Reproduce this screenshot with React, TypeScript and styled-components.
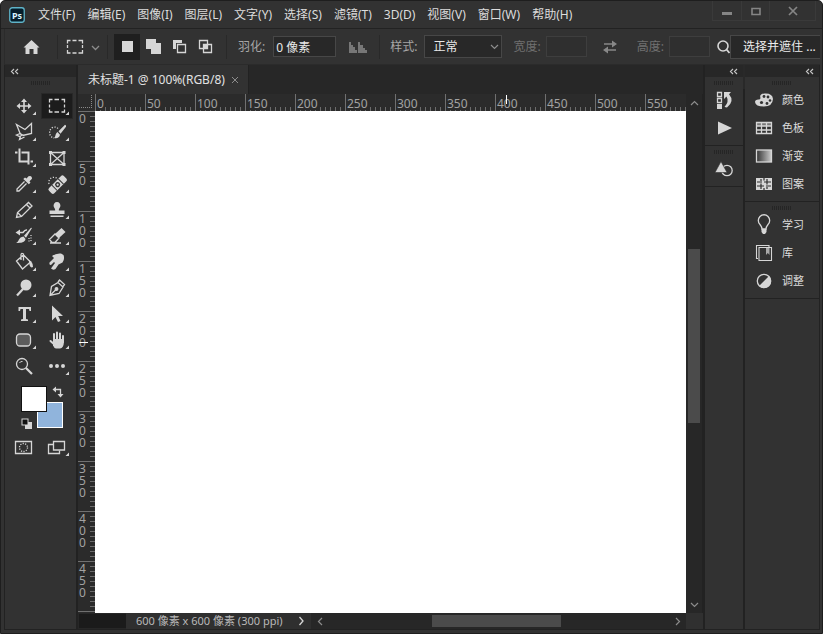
import React, { ReactNode } from "react";
import styled, { createGlobalStyle, css } from "styled-components";

const c = {
  panel: "#323232",
  dark: "#272727",
  ruler: "#2b2b2b",
  line: "#222222",
  field: "#282828",
  edge: "#474747",
  icon: "#d6d6d6",
  text: "#dcdcdc",
  soft: "#a6a6a6",
  dim: "#707070",
};

const Global = createGlobalStyle`
  * { box-sizing: border-box; }
  html, body { margin: 0; background: #fff; }
  body, button, input, select {
    font-family: "Noto Sans", "Noto Sans CJK SC", sans-serif;
    font-size: 12px;
    line-height: 16px;
    color: ${c.text};
  }
  button { background: none; border: 0; padding: 0; margin: 0; }
  svg { display: block; flex: none; }
`;

/* ---------- frame ---------- */

const Window = styled.div`
  height: 100vh;
  min-height: 480px;
  display: flex;
  flex-direction: column;
  background: ${c.panel};
  border: 1px solid #1e1e1e;
  border-radius: 5px 5px 0 0;
  overflow: hidden;
`;

const TitleBar = styled.header`
  display: flex;
  align-items: center;
  height: 28px;
  flex: none;
  padding-left: 8px;
  border-bottom: 1px solid ${c.line};
`;

const Menus = styled.nav`
  display: flex;
  gap: 12px;
  margin-left: 13px;
  flex: 1;
  white-space: nowrap;
`;

const WindowButtons = styled.div`
  display: flex;
  align-self: flex-start;
  margin-right: 6px;
  border: 1px solid #3a3a3a;
  border-top: 0;
`;

const WindowButton = styled.button<{ $wide?: boolean }>`
  width: ${(p) => (p.$wide ? 46 : 28)}px;
  height: 19px;
  display: flex;
  align-items: center;
  justify-content: center;
  & + & { border-left: 1px solid #3a3a3a; }
`;

const OptionsBar = styled.div`
  display: flex;
  align-items: center;
  height: 36px;
  flex: none;
  margin: 0 2px 0 3px;
  border: 1px solid #2b2b2b;
  border-width: 0 0 1px 1px;
  white-space: nowrap;
  overflow: hidden;
`;

const Separator = styled.span`
  width: 1px;
  height: 24px;
  background: #292929;
  flex: none;
`;

const IconButton = styled.button<{ $w: number; $active?: boolean }>`
  width: ${(p) => p.$w}px;
  height: 26px;
  flex: none;
  display: flex;
  align-items: center;
  justify-content: center;
  background: ${(p) => (p.$active ? "#1f1f1f" : "transparent")};
`;

const SelectionModes = styled.div`
  display: flex;
  margin: 0 8px 0 6px;
`;

const Field = styled.label<{ $dim?: boolean; $gap: number; $before: number }>`
  display: flex;
  align-items: center;
  flex: none;
  gap: ${(p) => p.$gap}px;
  margin-left: ${(p) => p.$before}px;
  color: ${(p) => (p.$dim ? c.dim : c.soft)};
`;

const fieldBox = css`
  height: 21px;
  background: ${c.field};
  border: 1px solid ${c.edge};
  border-radius: 0;
  color: #e8e8e8;
  outline: none;
  margin: 0;
`;

const TextInput = styled.input<{ $w: number }>`
  ${fieldBox}
  width: ${(p) => p.$w}px;
  padding: 0 2px;
  &:disabled { background: #2f2f2f; border-color: #3e3e3e; }
`;

const SelectWrap = styled.span`
  display: grid;
  align-items: center;
  > * { grid-area: 1 / 1; }
  > svg { justify-self: end; margin-right: 3px; pointer-events: none; }
`;

const Select = styled.select`
  ${fieldBox}
  width: 78px;
  height: 23px;
  padding: 0 8px;
  appearance: none;
`;

const MaskButton = styled.button`
  flex: 1;
  min-width: 88px;
  height: 24px;
  background: ${c.field};
  border: 1px solid ${c.edge};
  border-right: 0;
  color: #ececec;
  padding-left: 8px;
  text-align: center;
`;

/* ---------- body ---------- */

const Body = styled.div`
  flex: 1;
  min-height: 0;
  display: flex;
  margin: 0 2px 3px 3px;
  border: 1px solid ${c.line};
  border-top: 0;
  background: ${c.line};
`;

const Dock = styled.aside<{ $w: number }>`
  width: ${(p) => p.$w}px;
  flex: none;
  display: flex;
  flex-direction: column;
  background: ${c.panel};
`;

const DockHeader = styled.div<{ $left?: boolean }>`
  height: 12px;
  flex: none;
  display: flex;
  align-items: center;
  justify-content: ${(p) => (p.$left ? "flex-start" : "flex-end")};
  padding: 0 5px;
  background: ${c.dark};
`;

const Grip = styled.div`
  width: 20px;
  height: 4px;
  margin: 4px auto 1px;
  flex: none;
  background: repeating-linear-gradient(90deg, #252525 0 1px, ${c.panel} 1px 2px);
`;

const ToolGrid = styled.div<{ $top: number }>`
  display: grid;
  grid-template-columns: 32px 32px;
  grid-auto-rows: 26px;
  column-gap: 1px;
  padding: ${(p) => p.$top}px 0 0 3px;
`;

const Tool = styled.button<{ $active?: boolean }>`
  height: 26px;
  display: flex;
  align-items: center;
  justify-content: center;
  ${(p) => p.$active && css`
    background: #1c1c1c;
    box-shadow: inset 0 0 0 1px #282828;
  `}
`;

const Swatches = styled.div`
  position: relative;
  height: 48px;
  margin: 7px 0 0 16px;
`;

const Swatch = styled.button<{ $color: string; $back?: boolean }>`
  position: absolute;
  left: ${(p) => (p.$back ? 16 : 0)}px;
  top: ${(p) => (p.$back ? 16 : 0)}px;
  width: 26px;
  height: 26px;
  background: ${(p) => p.$color};
  border: 1px solid ${(p) => (p.$back ? "#fff" : "#111")};
`;

const SwatchAction = styled.button<{ $place: "swap" | "reset" }>`
  position: absolute;
  ${(p) => (p.$place === "swap" ? "left: 31px; top: 0;" : "left: 0; top: 32px;")}
`;

const Workspace = styled.main`
  flex: 1;
  min-width: 0;
  display: flex;
  flex-direction: column;
  margin: 0 2px;
  background: ${c.dark};
`;

const Tabs = styled.div`
  display: flex;
  height: 29px;
  flex: none;
`;

const Tab = styled.div`
  display: flex;
  align-items: center;
  gap: 6px;
  padding: 0 9px 0 10px;
  background: ${c.panel};
  color: #e2e2e2;
  border-right: 1px solid ${c.line};
`;

const Stage = styled.div`
  flex: 1;
  min-height: 0;
  display: grid;
  grid-template-columns: 17px minmax(0, 1fr) 17px;
  grid-template-rows: 17px minmax(0, 1fr);
  background: ${c.ruler};
`;

const Corner = styled.div`
  border-right: 1px dotted #8a8a8a;
  border-bottom: 1px dotted #8a8a8a;
  margin: 1px 3px 3px 1px;
`;

const Ruler = styled.div<{ $vertical?: boolean }>`
  position: relative;
  display: flex;
  flex-direction: ${(p) => (p.$vertical ? "column" : "row")};
  overflow: hidden;
  color: #a2a2a2;
  font-size: 12px;
  line-height: 12px;
`;

const Mark = styled.div<{ $vertical?: boolean }>`
  flex: none;
  ${(p) => p.$vertical
    ? css`
        height: 50px;
        padding: 1px 0 0 1px;
        border-top: 1px solid #707070;
        background: repeating-linear-gradient(180deg, transparent 0 4px, #6c6c6c 4px 5px) right / 5px 100% no-repeat;
      `
    : css`
        width: 50px;
        padding: 4px 0 0 1px;
        border-left: 1px solid #707070;
        background: repeating-linear-gradient(90deg, transparent 0 4px, #6c6c6c 4px 5px) bottom / 100% 4px no-repeat;
      `}
`;

const MarkLabel = styled.span<{ $vertical?: boolean }>`
  display: block;
  width: ${(p) => (p.$vertical ? "7px" : "fit-content")};
  word-break: break-all;
  background: ${c.ruler};
`;

const Pointer = styled.i<{ $vertical?: boolean }>`
  position: absolute;
  background: #fff;
  ${(p) => (p.$vertical
    ? "left: 1px; top: 231px; width: 9px; height: 1px;"
    : "left: 411px; top: 1px; width: 1px; height: 9px;")}
`;

const Canvas = styled.div`
  background: #fff;
`;

const VScroll = styled.div`
  grid-column: 3;
  grid-row: 1 / 3;
  display: flex;
  flex-direction: column;
  background: ${c.dark};
  border-right: 1px solid ${c.line};
`;

const ScrollArrow = styled.button<{ $w?: number }>`
  width: ${(p) => (p.$w ? p.$w + "px" : "auto")};
  height: 18px;
  display: flex;
  flex: none;
  align-items: center;
  justify-content: center;
`;

const VTrack = styled.div`
  flex: 1;
  display: grid;
  grid-template-rows: 137fr 174fr 172fr;
  padding: 0 2px;
`;

const HTrack = styled.div`
  flex: 1;
  display: grid;
  grid-template-columns: 103fr 128fr 107fr;
  padding: 2px 0;
`;

const VThumb = styled.div` grid-row: 2; background: #4b4b4b; `;
const HThumb = styled.div` grid-column: 2; background: #4b4b4b; `;

const StatusBar = styled.footer`
  display: flex;
  height: 16px;
  flex: none;
  align-items: stretch;
`;

const Zoom = styled.div`
  width: 47px;
  margin: 1px 0 1px 1px;
  background: #1b1b1b;
`;

const Status = styled.div`
  display: flex;
  align-items: center;
  justify-content: space-between;
  width: 185px;
  padding: 0 6px 0 10px;
  background: #2f2f2f;
  color: #b8b8b8;
  font-size: 11px;
  white-space: nowrap;
`;

const HScroll = styled.div`
  flex: 1;
  display: flex;
  align-items: stretch;
  > button { height: 16px; }
`;

const StatusCorner = styled.div`
  width: 17px;
  background: #303030;
`;

const PanelGroup = styled.section`
  display: flex;
  flex-direction: column;
  padding-bottom: 3px;
  border-bottom: 1px solid ${c.line};
`;

const PanelButton = styled.button<{ $center?: boolean }>`
  height: 28px;
  display: flex;
  align-items: center;
  gap: 7px;
  padding-left: ${(p) => (p.$center ? 0 : 8)}px;
  justify-content: ${(p) => (p.$center ? "center" : "flex-start")};
  font-size: 11px;
`;

/* ---------- drawings ---------- */

const Svg = ({ w, h = w, children }: { w: number; h?: number; children: ReactNode }) => (
  <svg width={w} height={h} viewBox={`0 0 ${w} ${h}`} fill="none" stroke={c.icon} strokeWidth="1.3" aria-hidden="true">
    {children}
  </svg>
);

const Solid = ({ d }: { d: string }) => <path d={d} fill={c.icon} stroke="none" />;

const Chevrons = () => (
  <Svg w={9} h={7}><path d="M4 1L1.5 3.5L4 6M8 1L5.5 3.5L8 6" stroke="#c4c4c4" strokeWidth="1.2" /></Svg>
);

const Chevron = ({ dir }: { dir: "up" | "down" | "left" | "right" }) => {
  const d = { up: "M1 6L4.500 2.500L8 6", down: "M1 3L4.500 6.500L8 3", left: "M6 1L2.500 4.500L6 8", right: "M3 1L6.500 4.500L3 8" }[dir];
  return <Svg w={9}><path d={d} stroke="#8c8c8c" strokeWidth="1.2" /></Svg>;
};

const tools: { name: string; art: ReactNode; plain?: boolean; active?: boolean }[] = [
  { name: "移动工具", art: <><path d="M13 8v10M8 13h10" strokeWidth="1.6" /><Solid d="M13 5.500l3 3.500h-6zM13 20.500l3-3.500h-6zM5.500 13l3.500-3v6zM20.500 13l-3.500-3v6z" /></> },
  { name: "矩形选框工具", active: true, art: <path d="M5.500 9.500v-3h3M10.500 6.500h4.500M17.500 6.500h3v3M20.500 11.500v3M20.500 16.500v2.500h-3M15 19h-4.500M8.500 19h-3v-2.500M5.500 14.500v-3" /> },
  { name: "多边形套索工具", art: <><path d="M9.500 15.500L5.500 5.500L14 10.500L20.500 4.500V14.500L11.500 16.500" /><path d="M9 14.500l-3.500 1.500l3 1.500l3 -1.500zM9.500 17.500l-1 3l5-2.500" /></> },
  { name: "快速选择工具", art: <><path d="M14 9.500A5 5.500 0 1 0 10 19" strokeDasharray="1.200 1.500" /><Solid d="M22 6.500l-1-.8l-6.500 6.500l2 2.500l5.500-7zM13.500 13l2.500 2.800c-.5 3-3 4-6 3.200c2-1.200 1-4.500 3.500-6z" /></> },
  { name: "裁剪工具", art: <path d="M8.500 3.500V16.500H17M4 7.500h2.500M10.500 7.500h7v12M19.500 16.500h2.500" strokeWidth="2" /> },
  { name: "图框工具", plain: true, art: <><path d="M6.500 7.500h13.500v12H6.500zM6.500 7.500l13.500 12M20 7.500l-13.500 12" /><Solid d="M5 6h3v3H5zM18.500 6h3v3h-3zM5 18h3v3H5zM18.500 18h3v3h-3z" /></> },
  { name: "吸管工具", art: <><path d="M13.500 10.500L6 18v2h2l7.500-7.500" /><Solid d="M14 6.500l1.500 1l2-2.300q3.500-1.200 3.500 2.500l-2.500 2.500l1 1.500l-1.700 1.600l-5.500-5.300z" /></> },
  { name: "污点修复画笔工具", art: <><path d="M5 13c-1-5 3-8 8-6" strokeDasharray="1.200 1.600" /><g transform="rotate(-45 13.500 13.500)"><rect x="3" y="10" width="21" height="7.500" rx="2" fill={c.icon} stroke="none" /><path d="M9 10v7.500M18 10v7.500" stroke="#323232" strokeWidth="1" /><circle cx="13.500" cy="13.700" r="1.800" stroke="#323232" strokeWidth="1.4" /></g></> },
  { name: "铅笔工具", art: <path d="M5.500 20.500l1-5L17.500 5.500l3.500 3.500L10.500 19.500zM6.500 15.500l4 4M15.500 7.500l3.500 3.500" /> },
  { name: "仿制图章工具", art: <Solid d="M13 5a3.500 3.500 0 0 1 3.300 4.500c-.8 2-1.500 2-1.500 4h5.700v3.500h-15v-3.500h5.700c0-2-.7-2-1.500-4A3.500 3.500 0 0 1 13 5zM6.500 18.500h13v1.500h-13z" /> },
  { name: "历史记录画笔工具", art: <><path d="M7 9.500h5q2-3 4-2.500" strokeWidth="1.500" /><Solid d="M9 6.500v6l-4.500-3zM21 5l-1-.3l-7 8l2 2zM12.500 13.500l2 2.500c-.5 3.500-4 4-9.500 4c3-1 2.500-6 7.500-6.500z" /><path d="M20 12v7M18 15v4" strokeDasharray="1 1.500" /></> },
  { name: "橡皮擦工具", art: <><Solid d="M11 11l6.500-6l4 4l-6.500 6z" /><path d="M11 11l4 4l-4 4.500h-3l-2.500-3zM6 20h11" /></> },
  { name: "油漆桶工具", art: <><path d="M5.500 12l7-6l7 7l-8 7zM10 11V6q0-2.500 2.500-1v6.500" /><Solid d="M18 11q4 2 4 7q-2.500 1.500-3.500-2z" /></> },
  { name: "涂抹工具", art: <Solid d="M8 7q4-3 9-2.500l2.500 1.500q1.500 4-1 7.500l-4 2l-3 4.500q-2.500 1.500-4.500-.5l4-5.500l-1-1l-3 3q-2 0-1.500-2.500l4.500-4.500z" /> },
  { name: "减淡工具", art: <><circle cx="15" cy="10" r="5.500" fill={c.icon} stroke="none" /><path d="M12 14L6 20.500" strokeWidth="2.200" /></> },
  { name: "钢笔工具", art: <><path d="M6 20.500l1.500-9L14 7.500l5 4.500l-4 6.500zM6.500 20l6-6M14 7l1.500-2l5 4.500l-1.500 2" /><circle cx="12.500" cy="14" r="1.300" fill={c.icon} /></> },
  { name: "横排文字工具", art: <Solid d="M7.500 6h12.500v4h-1.500l-.5-2h-3v10l2 .5V20h-7v-1.500l2-.5V8H9.500l-.5 2H7.500z" /> },
  { name: "路径选择工具", art: <Solid d="M8 4.500v15l3.500-3.500l2.500 5l2.500-1l-2.300-5h4.800z" /> },
  { name: "圆角矩形工具", art: <rect x="5.500" y="7" width="14" height="12" rx="3.500" fill="#5c5c5c" /> },
  { name: "抓手工具", art: <><path d="M10 15V7M13 14V5.500M16 14V6.500M19 15V9M6.500 14l4.500 4" strokeWidth="2" strokeLinecap="round" /><Solid d="M9 12h11v3q-.5 6-4 6.500h-4q-2-.5-3-3z" /></> },
  { name: "缩放工具", plain: true, art: <><circle cx="11" cy="11" r="5.500" /><path d="M8.500 10q1-2 3-1.500" strokeWidth="1" /><path d="M15 15L21 21" strokeWidth="2.200" /></> },
  { name: "编辑工具栏", art: <Solid d="M7 11a2 2 0 1 1 0 4a2 2 0 1 1 0-4zM13 11a2 2 0 1 1 0 4a2 2 0 1 1 0-4zM19 11a2 2 0 1 1 0 4a2 2 0 1 1 0-4z" /> },
];

const ToolIcon = ({ art, plain }: { art: ReactNode; plain?: boolean }) => (
  <Svg w={26}>{art}{!plain && <Solid d="M25 18.500v3.500h-3.500z" />}</Svg>
);

const panels: { name: string; art: ReactNode }[][] = [
  [
    { name: "颜色", art: <><path d="M2 13q0-2.500 3.500-2.500q2 0 2-1.500q-1.500-4 4-4.500q8-.5 8.500 5.500q-.5 7.500-9 7.500q-8.500 0-9-4.500z" fill={c.icon} stroke="none" /><g fill={c.panel} stroke="none"><circle cx="11" cy="7.500" r="1.400" /><circle cx="15" cy="8" r="1.400" /><circle cx="17" cy="11.500" r="1.300" /><circle cx="14" cy="14.500" r="1.400" /><circle cx="8.500" cy="13.500" r="1.600" /></g></> },
    { name: "色板", art: <><rect x="3" y="5" width="16" height="4" fill="#777" stroke="none" /><path d="M3.500 5.500h15v11h-15zM3.500 9h15M3.500 13h15M8.500 5.500v11M13.500 5.500v11" /></> },
    { name: "渐变", art: <><defs><linearGradient id="ramp"><stop stopColor="#333" /><stop offset="1" stopColor="#ccc" /></linearGradient></defs><rect x="3.500" y="5" width="15" height="12" fill="url(#ramp)" /></> },
    { name: "图案", art: <><rect x="3" y="5" width="16" height="12" fill={c.icon} stroke="none" /><path d="M4 9h5M11 9h7M4 13h7M13 13h5M8 6v2M8 10.500v5.500M14 6v5.500M14 14v2M11 5v2.500M11 15v2" stroke="#2c2c2c" strokeWidth="1.200" /></> },
  ],
  [
    { name: "学习", art: <><path d="M9 15q0-2-2-4.500a5.700 5.700 0 1 1 8 0q-2 2.500-2 4.500z" /><Solid d="M8.500 15h5v3l-1.500 2h-2l-1.500-2z" /></> },
    { name: "库", art: <><path d="M16 5V3.500H3.500v13H5M6 5.500h12.500v13H6z" strokeWidth="1.100" /><path d="M13 6h3.500v7l-1.700-2l-1.800 2z" fill="#a8a8a8" stroke="none" /></> },
    { name: "调整", art: <><circle cx="11" cy="11" r="6.700" /><Solid d="M16 6a7 7 0 0 1-10 10z" /></> },
  ],
];

const menus = ["文件(F)", "编辑(E)", "图像(I)", "图层(L)", "文字(Y)", "选择(S)", "滤镜(T)", "3D(D)", "视图(V)", "窗口(W)", "帮助(H)"];
const across = Array.from({ length: 12 }, (_, i) => i * 50);
const down = Array.from({ length: 10 }, (_, i) => i * 50);

const selectionModes: { name: string; art: ReactNode }[] = [
  { name: "新选区", art: <Solid d="M4 4h11v11H4z" /> },
  { name: "添加到选区", art: <Solid d="M2 2h10v4h5v11H7v-5H2z" /> },
  { name: "从选区减去", art: <><Solid d="M3 3h9v3H6v6H3z" /><path d="M7.500 7.500h8v8h-8z" /></> },
  { name: "与选区交叉", art: <><path d="M3.500 3.500h8v8h-8zM7.500 7.500h8v8h-8z" /><Solid d="M8 8h4v4H8z" /></> },
];

export default function App() {
  return (
    <>
      <Global />
      <Window>
        <TitleBar>
          <svg width="16" height="16" viewBox="0 0 16 16" role="img" aria-label="Ps">
            <rect x=".75" y=".75" width="14.500" height="14.500" rx="2.500" fill="#061e2b" stroke="#5fb3c8" strokeWidth="1.300" />
            <text x="8" y="11.500" textAnchor="middle" fontSize="9" fontWeight="700" fontFamily="Noto Sans, sans-serif" fill="#d8f4ff" stroke="none">Ps</text>
          </svg>
          <Menus>{menus.map((m) => <button key={m}>{m}</button>)}</Menus>
          <WindowButtons>
            <WindowButton aria-label="最小化"><Svg w={12}><path d="M1 8.500h10" stroke="#858585" strokeWidth="3" /></Svg></WindowButton>
            <WindowButton aria-label="最大化"><Svg w={12}><path d="M2 3.500h8v6H2z" stroke="#858585" strokeWidth="1.600" /></Svg></WindowButton>
            <WindowButton $wide aria-label="关闭"><Svg w={12}><path d="M2 2l8 8M10 2l-8 8" stroke="#858585" strokeWidth="1.700" /></Svg></WindowButton>
          </WindowButtons>
        </TitleBar>

        <OptionsBar>
          <IconButton $w={52} aria-label="主页"><Svg w={18} h={16}><Solid d="M9.500 1l8 7.500h-2V15h-4v-5h-4v5h-4V8.500h-2z" /></Svg></IconButton>
          <Separator />
          <IconButton $w={49} aria-label="矩形选框工具">
            <Svg w={36} h={18}>
              <path d="M2.500 5.500v-3h3M7.500 2.500h4M13.500 2.500h4v3M17.500 7v3M17.500 12v3h-4M11.500 15h-4M5.500 15h-3v-3M2.500 10v-3" />
              <path d="M27 8l3.500 3.500L34 8" stroke="#8c8c8c" />
            </Svg>
          </IconButton>
          <Separator />
          <SelectionModes>
            {selectionModes.map((m, i) => (
              <IconButton key={m.name} $w={26} $active={i === 0} aria-label={m.name}><Svg w={19}>{m.art}</Svg></IconButton>
            ))}
          </SelectionModes>
          <Separator />
          <Field $gap={8} $before={11}>羽化: <TextInput $w={63} defaultValue="0 像素" /></Field>
          <IconButton $w={43} aria-label="消除锯齿"><Svg w={20} h={14}><path d="M1 13V2h2v3h2v2h2v3h2v3zM10 13V2h2v3h3v3h2v2h2v3z" fill="#777" stroke="none" /></Svg></IconButton>
          <Separator />
          <Field $gap={7} $before={10}>样式:
            <SelectWrap><Select defaultValue="正常"><option>正常</option></Select><Chevron dir="down" /></SelectWrap>
          </Field>
          <Field $dim $gap={5} $before={11}>宽度: <TextInput $w={41} disabled /></Field>
          <IconButton $w={46} aria-label="互换宽度和高度">
            <Svg w={16} h={14}><path d="M2 4h9M5 10h9" stroke="#888" strokeWidth="1.500" /><path d="M10 .5l5 3.500l-5 3.500zM6 6.500L1 10l5 3.500z" fill="#888" stroke="none" /></Svg>
          </IconButton>
          <Field $dim $gap={5} $before={4}>高度: <TextInput $w={41} disabled /></Field>
          <Svg w={20} h={16}><circle cx="13" cy="7" r="5" strokeWidth="1.600" /><path d="M16.500 10.500l3 3.500" strokeWidth="1.800" /></Svg>
          <MaskButton>选择并遮住 ...</MaskButton>
        </OptionsBar>

        <Body>
          <Dock $w={71}>
            <DockHeader $left><Chevrons /></DockHeader>
            <Grip />
            <ToolGrid $top={7}>
              {tools.map((t) => <Tool key={t.name} $active={t.active} aria-label={t.name}><ToolIcon art={t.art} plain={t.plain} /></Tool>)}
            </ToolGrid>
            <Swatches>
              <Swatch $back $color="#90b4dc" aria-label="背景色" />
              <Swatch $color="#fff" aria-label="前景色" />
              <SwatchAction $place="swap" aria-label="切换前景色和背景色">
                <Svg w={12}><path d="M3 3.500h5.500v5" /><Solid d="M4 .5v6L.5 3.500zM5.500 8h6L8.500 11.500z" /></Svg>
              </SwatchAction>
              <SwatchAction $place="reset" aria-label="默认颜色">
                <Svg w={12}><Solid d="M4 4h7v7H4z" /><rect x="1" y="1" width="6" height="6" fill="#111" strokeWidth="1" /></Svg>
              </SwatchAction>
            </Swatches>
            <ToolGrid $top={0}>
              <Tool aria-label="快速蒙版"><Svg w={26}><path d="M4.500 7.500h16v12h-16z" /><circle cx="12.500" cy="13.500" r="4" strokeDasharray="1.200 1.300" /></Svg></Tool>
              <Tool aria-label="屏幕模式"><Svg w={26}><path d="M10 10.500H4.500v9h11V16.500" /><path d="M9.500 7.500h11v8.500h-11z" /><Solid d="M25 18.500v3.500h-3.500z" /></Svg></Tool>
            </ToolGrid>
          </Dock>

          <Workspace>
            <Tabs>
              <Tab>
                <span>未标题-1 @ 100%(RGB/8)</span>
                <button aria-label="关闭标签"><Svg w={8}><path d="M1 1l6 6M7 1l-6 6" stroke="#8c8c8c" strokeWidth="1" /></Svg></button>
              </Tab>
            </Tabs>
            <Stage>
              <Corner />
              <Ruler>
                {across.map((n) => <Mark key={n}><MarkLabel>{n}</MarkLabel></Mark>)}
                <Pointer />
              </Ruler>
              <VScroll>
                <ScrollArrow aria-label="向上滚动"><Chevron dir="up" /></ScrollArrow>
                <VTrack><VThumb /></VTrack>
                <ScrollArrow aria-label="向下滚动"><Chevron dir="down" /></ScrollArrow>
              </VScroll>
              <Ruler $vertical>
                {down.map((n) => <Mark $vertical key={n}><MarkLabel $vertical>{n}</MarkLabel></Mark>)}
                <Mark $vertical />
                <Pointer $vertical />
              </Ruler>
              <Canvas />
            </Stage>
            <StatusBar>
              <Zoom />
              <Status>600 像素 x 600 像素 (300 ppi)<Svg w={7} h={10}><path d="M1.500 1l3.500 4l-3.500 4" /></Svg></Status>
              <HScroll>
                <ScrollArrow $w={18} aria-label="向左滚动"><Chevron dir="left" /></ScrollArrow>
                <HTrack><HThumb /></HTrack>
                <ScrollArrow $w={18} aria-label="向右滚动"><Chevron dir="right" /></ScrollArrow>
              </HScroll>
              <StatusCorner />
            </StatusBar>
          </Workspace>

          <Dock $w={38}>
            <DockHeader><Chevrons /></DockHeader>
            <PanelGroup>
              <Grip />
              <PanelButton $center aria-label="历史记录">
                <Svg w={22}><path d="M4.500 3.500h4v4h-4zM4.500 9.500h4v4h-4z" /><Solid d="M4 15h5v5H4zM11 3h7l-2 2.200q6 6.800-2 13.300l-2.500-.5q5-5.500 2-10.500L11 10z" /></Svg>
              </PanelButton>
              <PanelButton $center aria-label="动作"><Svg w={22}><Solid d="M5 4.500v13L19 11z" /></Svg></PanelButton>
            </PanelGroup>
            <PanelGroup>
              <Grip />
              <PanelButton $center aria-label="形状">
                <Svg w={22}><circle cx="14" cy="12.500" r="5.200" /><path d="M8 3.500L14 14.500H2z" fill={c.icon} stroke={c.panel} strokeWidth=".6" /></Svg>
              </PanelButton>
            </PanelGroup>
          </Dock>
          <Separator as="i" />
          <Separator as="i" />
          <Dock $w={74}>
            <DockHeader><Chevrons /></DockHeader>
            {panels.map((group, i) => (
              <PanelGroup key={i}>
                <Grip />
                {group.map((p) => <PanelButton key={p.name}><Svg w={22}>{p.art}</Svg>{p.name}</PanelButton>)}
              </PanelGroup>
            ))}
          </Dock>
        </Body>
      </Window>
    </>
  );
}
